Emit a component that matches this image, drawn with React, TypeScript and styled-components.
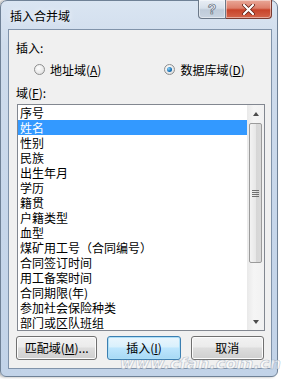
import React, { useState } from 'react';
import styled, { createGlobalStyle } from 'styled-components';

const GlobalStyle = createGlobalStyle`
  html, body {
    margin: 0;
    padding: 0;
    background: #ffffff;
  }
  body {
    font-family: "Noto Sans CJK SC", "Microsoft YaHei", "Liberation Sans", sans-serif;
    font-size: 12px;
    color: #000;
  }
`;

const Page = styled.div`
  width: 282px;
  height: 379px;
  position: relative;
  overflow: hidden;
  background: #fff;
`;

// Aero 窗口外框
const Window = styled.div`
  width: 278px;
  height: 377px;
  box-sizing: border-box;
  border: 1px solid #6f8196;
  border-radius: 7px 7px 6px 6px;
  background: linear-gradient(180deg, #dae5f2 0%, #cfdcec 12%, #c6d6ea 60%, #c2d3e8 100%);
  display: flex;
  flex-direction: column;
  box-shadow: -2px 0 3px rgba(0, 0, 0, 0.35);
`;

const TitleBar = styled.div`
  height: 28px;
  display: flex;
  align-items: flex-start;
  padding-left: 9px;
`;

const Title = styled.div`
  font-size: 12px;
  line-height: 12px;
  margin-top: 9px;
  color: #000;
  text-shadow: 0 0 6px rgba(255, 255, 255, 0.9);
`;

const CaptionButtons = styled.div`
  margin-left: auto;
  margin-right: 5px;
  display: flex;
  margin-top: -1px;
`;

const CaptionButton = styled.div<{ $w: number; $close?: boolean }>`
  width: ${p => p.$w}px;
  height: 19px;
  box-sizing: border-box;
  border: 1px solid ${p => (p.$close ? '#7a3a30' : '#6b7888')};
  border-top: none;
  border-radius: ${p => (p.$close ? '0 0 4px 0' : '0 0 0 4px')};
  border-left: ${p => (p.$close ? 'none' : undefined)};
  background: ${p =>
    p.$close
      ? 'linear-gradient(180deg, #e9a899 0%, #dd7f6b 45%, #c8432a 55%, #d3654b 100%)'
      : 'linear-gradient(180deg, #e9eef5 0%, #d7e0ea 45%, #bfcbd9 55%, #c9d4e1 100%)'};
  display: flex;
  align-items: center;
  justify-content: center;
  color: #fff;
  font-family: "Liberation Sans", sans-serif;
  font-weight: bold;
  box-shadow: inset 0 0 0 1px rgba(255, 255, 255, 0.45);
`;

const HelpGlyph = styled.span`
  font-size: 14px;
  line-height: 14px;
  color: #f5f8fb;
  -webkit-text-stroke: 0.6px #4d5a6b;
  font-family: "Liberation Sans", sans-serif;
`;

const Client = styled.div`
  margin: 0 5px 7px 7px;
  flex: 1;
  background: #f0f0f0;
  border: 1px solid #8093aa;
  display: flex;
  flex-direction: column;
  padding: 10px 7px 0 7px;
`;

const Label = styled.div`
  line-height: 16px;
  height: 16px;
`;

const Key = styled.span`
  text-decoration: underline;
  text-underline-offset: 1px;
`;

const RadioRow = styled.div`
  display: flex;
  margin-top: 5px;
  height: 16px;
  align-items: center;
`;

const RadioOption = styled.label<{ $left: number }>`
  display: flex;
  align-items: center;
  gap: 5px;
  margin-left: ${p => p.$left}px;
  cursor: default;
`;

const RadioCircle = styled.span<{ $checked: boolean }>`
  width: 11px;
  height: 11px;
  border-radius: 50%;
  border: 1px solid #8e8f8f;
  background: radial-gradient(circle at 40% 35%, #ffffff 0%, #e8e8e8 60%, #d4d4d4 100%);
  display: flex;
  align-items: center;
  justify-content: center;
  box-sizing: border-box;

  &::after {
    content: '';
    display: ${p => (p.$checked ? 'block' : 'none')};
    width: 5px;
    height: 5px;
    border-radius: 50%;
    background: radial-gradient(circle at 35% 35%, #8fd3f7 0%, #1b74b8 55%, #0d4f85 100%);
  }
`;

const FieldLabel = styled(Label)`
  margin-top: 8px;
`;

const ListBox = styled.div`
  margin-top: 3px;
  margin-left: 1px;
  width: 248px;
  height: 227px;
  box-sizing: border-box;
  border: 1px solid #828790;
  background: #fff;
  display: flex;
`;

const Items = styled.div`
  flex: 1;
  overflow: hidden;
`;

const Item = styled.div<{ $selected: boolean }>`
  height: 15px;
  padding-left: 2px;
  white-space: nowrap;
  background: ${p => (p.$selected ? '#3399ff' : 'transparent')};
  color: ${p => (p.$selected ? '#ffffff' : '#000')};
`;

const ItemText = styled.span`
  display: inline-block;
  height: 15px;
  line-height: 15px;
  overflow: hidden;
  vertical-align: top;
`;

const ScrollBar = styled.div`
  width: 17px;
  background: linear-gradient(90deg, #e9e9e9, #f5f5f5 40%, #f1f1f1);
  display: flex;
  flex-direction: column;
  align-items: center;
`;

const Arrow = styled.div<{ $down?: boolean }>`
  height: 17px;
  width: 17px;
  display: flex;
  align-items: center;
  justify-content: center;

  &::before {
    content: '';
    width: 0;
    height: 0;
    border-left: 3.5px solid transparent;
    border-right: 3.5px solid transparent;
    ${p =>
      p.$down ? 'border-top: 4px solid #4d4d4d;' : 'border-bottom: 4px solid #4d4d4d;'}
  }
`;

const Track = styled.div`
  flex: 1;
  width: 100%;
  display: flex;
  justify-content: center;
`;

const Thumb = styled.div`
  width: 13px;
  height: 140px;
  margin-top: 1px;
  box-sizing: border-box;
  border: 1px solid #9b9b9b;
  border-radius: 2px;
  background: linear-gradient(90deg, #f3f3f3 0%, #e8e8e8 50%, #d6d6d6 51%, #dadada 100%);
  display: flex;
  align-items: center;
  justify-content: center;
`;

const Grip = styled.div`
  width: 7px;
  height: 7px;
  background: repeating-linear-gradient(180deg, #707070 0 1px, transparent 1px 2px);
`;

const ButtonRow = styled.div`
  display: flex;
  margin-top: 5px;
  gap: 10px;
`;

const Button = styled.button<{ $w: number; $default?: boolean }>`
  width: ${p => p.$w}px;
  height: 24px;
  box-sizing: border-box;
  border: 1px solid ${p => (p.$default ? '#3c7fb1' : '#707070')};
  border-radius: 3px;
  background: ${p =>
    p.$default
      ? 'linear-gradient(180deg, #eaf6fd 0%, #d9f0fc 45%, #bee6fd 50%, #a7d9f5 100%)'
      : 'linear-gradient(180deg, #f2f2f2 0%, #ebebeb 45%, #dddddd 50%, #cfcfcf 100%)'};
  box-shadow: inset 0 0 0 1px ${p => (p.$default ? '#aedff7' : '#fcfcfc')};
  font-family: inherit;
  font-size: 12px;
  color: #000;
  padding: 0;
  line-height: 20px;
`;

// 水印，盖在对话框右下角
const Watermark = styled.div`
  position: absolute;
  right: 1px;
  bottom: 6px;
  font-family: "DejaVu Sans", sans-serif;
  font-style: italic;
  font-weight: bold;
  font-size: 16px;
  letter-spacing: 0.2px;
  color: rgba(255, 255, 255, 0.6);
  -webkit-text-stroke: 0.7px rgba(140, 155, 175, 0.55);
  pointer-events: none;
`;

const fields = [
  '序号',
  '姓名',
  '性别',
  '民族',
  '出生年月',
  '学历',
  '籍贯',
  '户籍类型',
  '血型',
  '煤矿用工号（合同编号）',
  '合同签订时间',
  '用工备案时间',
  '合同期限(年)',
  '参加社会保险种类',
  '部门或区队班组',
];

const App: React.FC = () => {
  const [mode, setMode] = useState<'address' | 'database'>('database');
  const [selected, setSelected] = useState(1);

  return (
    <Page>
      <GlobalStyle />
      <Window>
        <TitleBar>
          <Title>插入合并域</Title>
          <CaptionButtons>
            <CaptionButton $w={28}>
              <HelpGlyph>?</HelpGlyph>
            </CaptionButton>
            <CaptionButton $w={46} $close>
              <svg width="13" height="11" viewBox="0 0 13 11">
                <path
                  d="M2 1 L11 10 M11 1 L2 10"
                  stroke="#5a1a10"
                  strokeWidth="3.6"
                  strokeLinecap="round"
                />
                <path
                  d="M2 1 L11 10 M11 1 L2 10"
                  stroke="#ffffff"
                  strokeWidth="2.2"
                  strokeLinecap="round"
                />
              </svg>
            </CaptionButton>
          </CaptionButtons>
        </TitleBar>
        <Client>
          <Label>插入:</Label>
          <RadioRow>
            <RadioOption $left={18} onClick={() => setMode('address')}>
              <RadioCircle $checked={mode === 'address'} />
              <span>
                地址域(<Key>A</Key>)
              </span>
            </RadioOption>
            <RadioOption $left={63} onClick={() => setMode('database')}>
              <RadioCircle $checked={mode === 'database'} />
              <span>
                数据库域(<Key>D</Key>)
              </span>
            </RadioOption>
          </RadioRow>
          <FieldLabel>
            域(<Key>F</Key>):
          </FieldLabel>
          <ListBox>
            <Items>
              {fields.map((f, i) => (
                <Item key={f} $selected={i === selected} onClick={() => setSelected(i)}>
                  <ItemText>{f}</ItemText>
                </Item>
              ))}
            </Items>
            <ScrollBar>
              <Arrow />
              <Track>
                <Thumb>
                  <Grip />
                </Thumb>
              </Track>
              <Arrow $down />
            </ScrollBar>
          </ListBox>
          <ButtonRow>
            <Button $w={82}>
              匹配域(<Key>M</Key>)...
            </Button>
            <Button $w={74} $default>
              插入(<Key>I</Key>)
            </Button>
            <Button $w={74}>取消</Button>
          </ButtonRow>
        </Client>
      </Window>
      <Watermark>www.cfan.com.cn</Watermark>
    </Page>
  );
};

export default App;
